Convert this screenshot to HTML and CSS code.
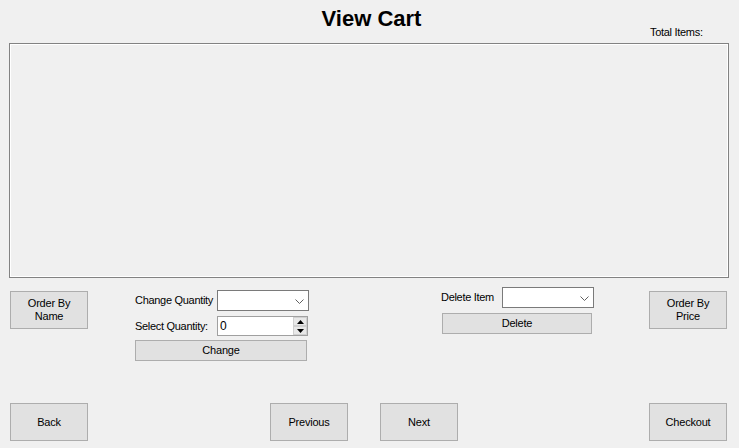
FILE: index.html
```html
<!DOCTYPE html>
<html>
<head>
<meta charset="utf-8">
<link rel="stylesheet" href="styles.css">
</head>
<body>
<div class="form">
  <header class="header">
    <h1 class="title">View Cart</h1>
    <span class="total">Total Items:</span>
  </header>
  <div class="listbox"></div>
  <div class="middle">
    <button class="btn btn-order">Order By<br>Name</button>
    <div class="change-group">
      <div class="field-row">
        <span class="label label-change">Change Quantity</span>
        <div class="combo">
          <svg class="chev" width="9" height="5" viewBox="0 0 9 5"><polyline points="0.5,0.5 4.5,4.5 8.5,0.5" fill="none" stroke="#606060" stroke-width="1"/></svg>
        </div>
      </div>
      <div class="field-row row-num">
        <span class="label label-change">Select Quantity:</span>
        <div class="numeric">
          <span class="num-val">0</span>
          <div class="spin">
            <div class="spin-btn"><svg width="7" height="4" viewBox="0 0 7 4"><polygon points="3.5,0 7,4 0,4" fill="#000"/></svg></div>
            <div class="spin-btn"><svg width="7" height="4" viewBox="0 0 7 4"><polygon points="0,0 7,0 3.5,4" fill="#000"/></svg></div>
          </div>
        </div>
      </div>
      <button class="btn btn-change">Change</button>
    </div>
    <div class="delete-group">
      <div class="field-row">
        <span class="label label-delete">Delete Item</span>
        <div class="combo">
          <svg class="chev" width="9" height="5" viewBox="0 0 9 5"><polyline points="0.5,0.5 4.5,4.5 8.5,0.5" fill="none" stroke="#606060" stroke-width="1"/></svg>
        </div>
      </div>
      <button class="btn btn-delete">Delete</button>
    </div>
    <button class="btn btn-order btn-price">Order By<br>Price</button>
  </div>
  <div class="bottom">
    <button class="btn btn-nav">Back</button>
    <button class="btn btn-nav btn-prev">Previous</button>
    <button class="btn btn-nav btn-next">Next</button>
    <button class="btn btn-nav btn-checkout">Checkout</button>
  </div>
</div>
</body>
</html>
```
FILE: styles.css
```css
html, body {
  margin: 0;
  padding: 0;
  background: #f0f0f0;
}
body {
  width: 739px;
  height: 448px;
  overflow: hidden;
  font-family: "Liberation Sans", Arial, sans-serif;
  font-size: 11px;
  color: #000;
}
.form {
  display: flex;
  flex-direction: column;
  width: 739px;
  height: 448px;
}
.header {
  height: 43px;
  position: relative;
  display: flex;
  justify-content: center;
}
.title {
  margin: 6px 0 0 4px;
  font-size: 22px;
  font-weight: bold;
  line-height: 26px;
  letter-spacing: 0;
}
.total {
  position: absolute;
  left: 650px;
  top: 26px;
  font-size: 11px;
  line-height: 13px;
  letter-spacing: -0.3px;
}
.listbox {
  margin-left: 9px;
  width: 716px;
  height: 231px;
  border: 1px solid #828282;
  box-shadow: inset 1px 1px 0 #fff, inset -1px -1px 0 #fff;
  background: #f0f0f0;
  padding: 1px;
}
.btn {
  font-family: "Liberation Sans", Arial, sans-serif;
  font-size: 11px;
  letter-spacing: -0.2px;
  line-height: 13px;
  background: #e1e1e1;
  border: 1px solid #adadad;
  color: #000;
  padding: 0;
  margin: 0;
  box-sizing: border-box;
}
.middle {
  display: flex;
  align-items: flex-start;
  margin-top: 9px;
  height: 116px;
}
.btn-order {
  width: 78px;
  height: 38px;
  margin-left: 10px;
  margin-top: 4px;
  flex: none;
}
.btn-price {
  margin-left: 55px;
}
.change-group {
  display: flex;
  flex-direction: column;
  width: 174px;
  flex: none;
  margin-left: 47px;
  margin-top: 3px;
}
.field-row {
  display: flex;
  align-items: center;
}
.label {
  letter-spacing: -0.3px;
  line-height: 13px;
  white-space: nowrap;
  flex: none;
}
.label-change {
  width: 82px;
}
.label-delete {
  width: 61px;
}
.combo {
  width: 92px;
  height: 21px;
  box-sizing: border-box;
  border: 1px solid #7a7a7a;
  background: #fff;
  display: flex;
  align-items: center;
  justify-content: flex-end;
  flex: none;
}
.chev {
  margin-right: 4px;
  margin-top: 1px;
}
.row-num {
  margin-top: 5px;
}
.numeric {
  width: 91px;
  height: 20px;
  box-sizing: border-box;
  border: 1px solid #a0a0a0;
  background: #fff;
  display: flex;
  align-items: center;
  justify-content: space-between;
  flex: none;
}
.num-val {
  padding-left: 2px;
  font-size: 12px;
}
.spin {
  display: flex;
  flex-direction: column;
  width: 14px;
  height: 18px;
}
.spin-btn {
  height: 9px;
  box-sizing: border-box;
  background: #e8e8e8;
  border: 1px solid #d0d0d0;
  display: flex;
  align-items: center;
  justify-content: center;
}
.btn-change {
  width: 172px;
  height: 21px;
  margin-top: 4px;
}
.delete-group {
  display: flex;
  flex-direction: column;
  width: 153px;
  flex: none;
  margin-left: 132px;
}
.btn-delete {
  width: 150px;
  height: 21px;
  margin-top: 5px;
  margin-left: 1px;
}
.bottom {
  display: flex;
}
.btn-nav {
  width: 78px;
  height: 38px;
  margin-left: 10px;
  flex: none;
}
.btn-prev {
  margin-left: 182px;
}
.btn-next {
  margin-left: 32px;
}
.btn-checkout {
  margin-left: 191px;
}
```
